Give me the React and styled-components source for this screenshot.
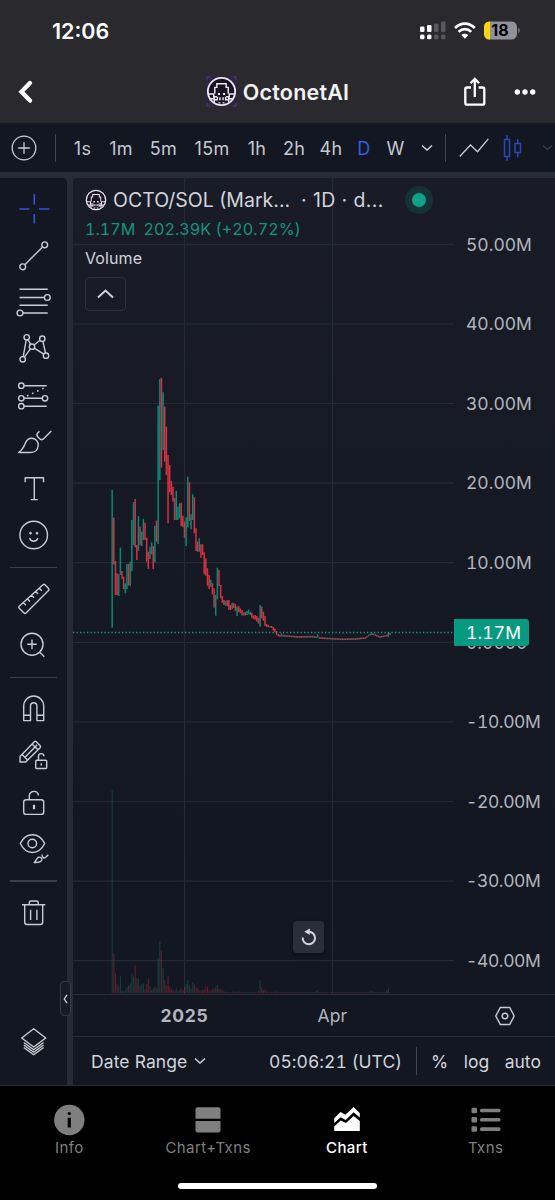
import React from 'react';
import styled, { createGlobalStyle } from 'styled-components';

const GlobalStyle = createGlobalStyle`
* {
    box-sizing: border-box;
}
body {
    margin: 0;
    background: #000;
    font-family: Inter, "Liberation Sans", sans-serif;
    color: #d1d4dc;
}
`;

const UP = '#089981';
const DOWN = '#f23645';

const intervals = [
    { label: '1s', width: 19 },
    { label: '1m', width: 24 },
    { label: '5m', width: 27 },
    { label: '15m', width: 36 },
    { label: '1h', width: 20 },
    { label: '2h', width: 20 },
    { label: '4h', width: 20 },
    { label: 'D', width: 12, active: true },
    { label: 'W', width: 17 },
];

const prices = ['50.00M', '40.00M', '30.00M', '20.00M', '10.00M', '0.0000', '-10.00M', '-20.00M', '-30.00M', '-40.00M'];

// one bar per day: direction, high, low (pane pixels)
const candles = [
    ['u', 312, 449.7], ['d', 339.7, 386.3], ['d', 383, 417], ['d', 395.3, 417], ['u', 396.3, 418], ['u', 369.7, 397],
    ['d', 393, 401], ['d', 398.7, 411], ['u', 405.3, 415.3], ['u', 386, 411], ['d', 386, 407.7], ['u', 383.7, 407.7],
    ['u', 342, 393], ['u', 324.3, 367], ['d', 321, 369.3], ['d', 367, 382], ['u', 338, 372.7], ['d', 348.7, 367],
    ['u', 353.7, 368], ['u', 341, 362], ['d', 344.7, 362], ['d', 359.7, 383.7], ['d', 373.7, 391], ['u', 368.7, 381],
    ['u', 364.3, 376.3], ['d', 368, 391], ['u', 348, 384.3], ['d', 342.7, 363.7], ['u', 227.7, 366], ['u', 201, 302],
    ['d', 199.7, 289.7], ['u', 214.3, 272], ['d', 228.7, 283.7], ['d', 248.7, 297], ['d', 277, 345.3], ['d', 287, 314.3],
    ['d', 303, 317], ['d', 308.7, 323.7], ['d', 320, 342], ['u', 312.7, 342], ['u', 328.7, 342], ['u', 325.3, 340.3],
    ['d', 324.7, 348], ['d', 337.7, 349.3], ['d', 343.7, 359.7], ['u', 339.3, 368], ['u', 298.7, 349.3], ['d', 304.3, 343],
    ['u', 336.3, 351.3], ['u', 316.3, 342], ['d', 319.3, 355.3], ['d', 350.3, 373], ['d', 363.7, 373.7], ['u', 360.3, 373.7],
    ['d', 366.3, 379.7], ['d', 366.3, 377], ['d', 374.3, 396.3], ['d', 380.3, 397.7], ['d', 390.3, 407.7], ['d', 397, 411],
    ['u', 402, 408.7], ['d', 405.3, 416.3], ['d', 410.3, 429.7], ['u', 417, 437.7], ['u', 389.7, 421.3], ['d', 392, 408],
    ['d', 407, 420.3], ['d', 418, 424.7], ['d', 422, 427], ['u', 423, 427.7], ['d', 422.3, 428], ['d', 422, 432],
    ['d', 427, 432], ['u', 424.7, 431], ['d', 425.3, 430], ['d', 426.3, 433], ['u', 428.7, 438], ['d', 428, 434],
    ['d', 430.5, 435], ['d', 432, 437.5], ['u', 434.5, 437.5], ['d', 434, 437.5], ['u', 433, 437], ['u', 431.5, 436],
    ['u', 434, 437], ['d', 434.5, 439.7], ['d', 437.5, 441], ['d', 437, 441.5], ['d', 438, 443.5], ['d', 440, 445.5],
    ['u', 427, 448.7], ['d', 428.7, 440.3], ['d', 433.7, 442.7], ['d', 438, 448], ['d', 446, 449], ['d', 447, 449.2],
    ['u', 448, 449.5], ['d', 448, 450], ['d', 449, 452.5], ['d', 450.5, 454.5], ['d', 453, 457], ['d', 456, 458.3],
    ['d', 457, 458.5], ['u', 455.3, 458.5], ['d', 456.8, 458.5], ['u', 457, 458.8],
];

// the flat months after the sell-off
const tail = [
    [106, 458], [113, 459], [122, 458.6], [126, 460], [140, 461.3], [148, 461], [154, 460], [156, 457.5], [158, 455.5], [160, 457],
    [163, 459], [166, 458], [168, 457], [170, 455],
];

tail.slice(0, -1).forEach(([from, y], k) => {
    const [to, end] = tail[k + 1];
    for (let i = from; i < to; i++) {
        const mid = y + ((end - y) * (i - from)) / (to - from);
        candles[i] = [i % 3 === 0 ? 'u' : 'd', mid - 0.8, mid + 0.8];
    }
});
candles[125] = ['u', 456.3, 459.5];
candles[158] = ['u', 454.5, 457];
candles[168] = ['u', 454.5, 459];

const volumes = [
    203, 40, 20, 9, 6, 17, 2, 2, 3, 6, 8, 10, 20, 17, 28, 15, 15, 7, 9, 10, 4, 9, 14, 7, 3, 5, 7, 5, 35, 52, 43, 25, 13, 8, 17, 7,
    4, 3, 2, 5, 2, 3, 5, 3, 6, 9, 13, 8, 5, 11, 9, 6, 5, 3, 3, 3, 4, 7, 7, 3, 3, 4, 5, 6, 8, 4, 4, 3, 2, 1.5, 1, 1, 1, 1, 2, 1, 1,
    2, 1, 1, 1, 1, 1, 1, 1, 1, 1, 1, 1, 2, 13, 6, 3, 4, 2, 1, 1, 1, 1, 1, 2, 1, 1,
];
volumes[124] = 2;
volumes[125] = 3;
volumes[157] = 2;
volumes[158] = 2;
volumes[167] = 3;
volumes[168] = 5;

const Octopus = ({ size, tile }) => (
    <svg width={size} height={size} viewBox="0 0 30 30" fill="none" stroke="#ece6f5" strokeWidth="1.4">
        {tile && <rect width="30" height="30" rx="1" fill="#2d2543" stroke="none" />}
        {tile && <path d="M1 4V1h3M26 1h3v3M1 26v3h3M26 29h3v-3" stroke="#463864" />}
        <circle cx="15" cy="15" r="13.2" fill="#17131f" strokeWidth="1.8" />
        <path d="M8.5 17v-6h2V7.5h9V11h2v6M2.5 17.5h5v2.5h3M27.5 17.5h-5v2.5h-3M4 22h4v-2M26 22h-4v-2M11 20v3H8v3M19 20v3h3v3M13.5 20.500v3M16.500 20.500v3M12 26h2M16 26h2" />
        <path d="M11.500 17.500h2M16.500 17.500h2" strokeWidth="2" />
    </svg>
);

const Chevron = ({ width = 12, flip, color = 'currentColor', weight = 1.5 }) => (
    <svg width={width} height={width / 2 + 2} viewBox={`0 0 ${width} ${width / 2 + 2}`} fill="none" stroke={color} strokeWidth={weight}>
        <path d={flip ? `M1 ${width / 2}L${width / 2} 1.500L${width - 1} ${width / 2}` : `M1 1.500L${width / 2} ${width / 2}L${width - 1} 1.500`} />
    </svg>
);

const tools = [
    [
        <path key="cross" stroke="#2e55e0" strokeWidth="1.6" d="M20.3 5.3V15.500M20.3 25V34.500M5.3 20H15.500M25 20H35.500" />,
        <g key="line">
            <circle cx="30.7" cy="8.800" r="2.900" />
            <circle cx="8.700" cy="30.800" r="2.900" />
            <path d="M28.600 10.900L10.800 28.700" />
        </g>,
        <g key="fib">
            <path d="M5.500 7.300H33.700M5.500 15.500H30.400M5.500 23.200H33.700M8.900 31H33.700" />
            <circle cx="33.300" cy="15.500" r="2.900" />
            <circle cx="6" cy="31" r="2.900" />
        </g>,
        <g key="pattern">
            <circle cx="12.700" cy="8.300" r="2.700" />
            <circle cx="28.300" cy="9.700" r="2.700" />
            <circle cx="18" cy="17.700" r="2.700" />
            <circle cx="8.700" cy="30.300" r="2.700" />
            <circle cx="32" cy="26.700" r="2.700" />
            <path d="M12.200 11L9.200 27.600M13.900 10.700L16.700 15.300M16.400 19.900L10.300 28.100M20.100 16L26 11.200M28.900 12.400L31.500 24M20.200 19.200L29.800 25.200" />
        </g>,
        <g key="forecast">
            <circle cx="7.300" cy="9.700" r="2.700" />
            <circle cx="7.300" cy="22.300" r="2.700" />
            <circle cx="31" cy="22.300" r="2.700" />
            <circle cx="7.300" cy="30.200" r="2.700" />
            <path d="M10 9.700H32.700M10 22.300H28.300M10 30.200H32.700" />
            <path d="M13 20L31 11.500" strokeDasharray="1.600 4" strokeWidth="1.600" />
        </g>,
        <g key="brush">
            <path d="M4.700 30.500C9 27.500 10 24.500 11.500 20.800C13 17.500 15.500 16 18.200 16.300C22 16.700 24.500 19.800 24.200 23.500C23.900 27.600 21 30.500 17 30.500Z" />
            <path d="M25.500 9.200L23.700 10.900C22.700 12 22.700 13.500 23.700 14.700L25.700 16.700C27 17.900 28.700 17.800 29.900 16.600L37.300 9" />
        </g>,
        <path key="text" d="M11.200 13.200V8.700H29.500V13.200M20.300 8.700V30.600M16.800 30.600H23.800" />,
        <g key="emoji">
            <circle cx="19.700" cy="20" r="13.800" />
            <path d="M15.500 23.300C17 27.200 22.400 27.200 23.900 23.300" />
            <circle cx="16.500" cy="18.200" r="1" fill="#c9ccd4" strokeWidth=".8" />
            <circle cx="23" cy="18.200" r="1" fill="#c9ccd4" strokeWidth=".8" />
        </g>,
    ],
    [
        <path key="ruler" d="M29 5.800Q30 4.800 31 5.800L34.500 9.500Q35.500 10.500 34.500 11.500L12 34Q11 35 10 34L5.200 29.300Q4.200 28.300 5.200 27.300ZM9.200 23.500L12 26.300M13.200 19.700L16 22.500M17.200 15.900L20 18.700M21.200 12.100L24 14.900M25 8.900L27.800 11.700" />,
        <path key="zoom" d="M29 18.300A11 11 0 1 1 7 18.300A11 11 0 1 1 29 18.300M18 13.600V23M13.300 18.300H22.700M25.600 26L30.300 30.700" />,
    ],
    [
        <path key="magnet" d="M9.700 31.600V17A10 10 0 0 1 29.700 17V31.600H22.900V17A3.200 3.200 0 0 0 16.500 17V31.600ZM9.700 26.300H16.500M22.900 26.300H29.700" />,
        <g key="pencil">
            <path d="M6 20.500L20.300 5.700Q21.300 4.800 22.300 5.700L26.200 9.700Q27 10.700 26.100 11.700L11.700 26H6ZM8 18.500L13.800 24.200M11 21.200L23.200 8.800M18 8L24 13.800" />
            <rect x="21.700" y="24.300" width="11" height="8.200" rx="1" />
            <path d="M24.500 24V20.500A2.700 2.700 0 0 1 29.900 20.200M27.200 27.300V29.500" />
        </g>,
        <g key="lock">
            <rect x="9.700" y="16.800" width="20" height="14.600" rx="2.500" />
            <path d="M15.300 16.500V12.500A4.700 4.700 0 0 1 24.300 11.300V12.500" />
            <path d="M20 21.800V26.200" strokeWidth="2.200" />
        </g>,
        <g key="eye">
            <path d="M6.300 14.500C9 9 13 5.700 18.300 5.700S28 9 30.700 14.500C28 20 23.800 23.500 18.300 23.500S9 20 6.300 14.500Z" />
            <circle cx="18.300" cy="14.500" r="4.300" />
            <path d="M20.200 33.500C22 32.500 22 30 24 28.500C26 27.500 28.500 29 27.800 31C27 33 24.500 33.700 20.200 33.500ZM28.200 25.500C27.500 28 30 29.700 31.500 28.500L34.300 25.800" />
        </g>,
    ],
    [
        <path key="trash" d="M8 11.700H31.300M15.300 11.500V9.500Q15.300 8 16.800 8H22.700Q24.200 8 24.200 9.500V11.500M10.700 11.700V29Q10.700 31.500 13.200 31.500H26.200Q28.700 31.500 28.700 29V11.700M16.600 16.800V27M22.900 16.800V27" />,
    ],
];

const ToolIcon = ({ children }) => (
    <ToolCell>
        <svg width="40" height="40" viewBox="0 0 40 40" fill="none" stroke="#c9ccd4" strokeWidth="1.400" strokeLinejoin="round">
            {children}
        </svg>
    </ToolCell>
);

const PriceChart = () => (
    <svg width="381" height="816" viewBox="0 0 381 816">
        {prices.map((p, i) => (
            <path key={p} d={`M0 ${66.300 + i * 79.600}H381`} stroke="#252a34" strokeWidth="1.200" />
        ))}
        <path d="M111.500 0V816M259.500 0V816" stroke="#252a34" strokeWidth="1.200" />
        {candles.map(([dir], i) => (
            <rect
                key={i}
                x={38.600 + i * 1.644}
                y={815.300 - (volumes[i] || 1)}
                width="1.150"
                height={volumes[i] || 1}
                fill={dir === 'u' ? UP : DOWN}
                opacity=".32"
            />
        ))}
        {candles.map(([dir, high, low], i) => (
            <rect key={i} x={38.400 + i * 1.644} y={high} width="1.500" height={low - high} fill={dir === 'u' ? UP : DOWN} opacity=".88" />
        ))}
        <path d="M0 454.500H381" stroke="#1c9a86" strokeWidth="1.300" strokeDasharray="1.300 2.200" />
    </svg>
);

const StatusIcons = () => (
    <svg width="104" height="22" viewBox="0 0 104 22">
        <g fill="#fff">
            <rect x="0" y="6.500" width="4.500" height="5.500" rx="1.200" />
            <rect x="7" y="5" width="4.500" height="7" rx="1.200" />
            <rect x="0" y="14.500" width="4.500" height="4.800" rx="1.500" />
            <rect x="7" y="14.500" width="4.500" height="4.800" rx="1.500" />
        </g>
        <g fill="#59585e">
            <rect x="14" y="3.500" width="4.500" height="8.500" rx="1.200" />
            <rect x="21" y="1.500" width="4.500" height="10.500" rx="1.200" />
            <rect x="14" y="14.500" width="4.500" height="4.800" rx="1.500" />
            <rect x="21" y="14.500" width="4.500" height="4.800" rx="1.500" />
        </g>
        <g fill="none" stroke="#fff" strokeWidth="2.700">
            <path d="M35 8C40.800 2.200 49 2.200 54.800 8" />
            <path d="M38.600 11.900C42.300 8.300 47.500 8.300 51.200 11.900" />
        </g>
        <path d="M41.400 15.100C43.300 13.300 46.500 13.300 48.400 15.100L44.900 18.700Z" fill="#fff" />
        <rect x="64" y="1.500" width="33" height="18" rx="5.500" fill="#929197" />
        <path d="M70 1.500H69.500A5.500 5.500 0 0 0 64 7V14A5.500 5.500 0 0 0 69.500 19.500H70Z" fill="#fdd60a" />
        <path d="M98.300 7.800C100 8.500 100 12.500 98.300 13.200Z" fill="#929197" />
        <text x="80" y="16.300" fontSize="16" fontWeight="700" textAnchor="middle">18</text>
    </svg>
);

const navItems = [
    {
        label: 'Info',
        icon: (
            <g>
                <circle cx="16.300" cy="16" r="15.200" fill="currentColor" />
                <circle cx="16.300" cy="9.600" r="1.700" fill="#000" />
                <path d="M16.300 13.800V23.500" stroke="#000" strokeWidth="3.200" />
            </g>
        ),
    },
    {
        label: 'Chart+Txns',
        icon: (
            <path fill="currentColor" d="M5.500 3.300H26.500Q28.500 3.300 28.500 5.300V14.800H3.500V5.300Q3.500 3.300 5.500 3.300ZM3.500 17H28.500V26.500Q28.500 28.500 26.500 28.500H5.500Q3.500 28.500 3.500 26.500Z" />
        ),
    },
    {
        label: 'Chart',
        active: true,
        icon: (
            <g fill="currentColor">
                <path d="M3.200 14.200L9.500 8L14.500 10.700L22.600 3L28.800 9.300V13.500L22.600 8.200L14.700 16L9.700 13.300L3.200 19Z" />
                <path d="M3.200 27V22.500L9.700 16.500L15 19L22.600 12L28.800 17V27Z" />
            </g>
        ),
    },
    {
        label: 'Txns',
        icon: (
            <g fill="currentColor">
                {[3.700, 13, 22.300].map((y) => (
                    <g key={y}>
                        <rect x="1.500" y={y} width="5.500" height="5.500" rx="1.200" />
                        <rect x="10" y={y + 1} width="20.500" height="3.600" rx="1.500" />
                    </g>
                ))}
            </g>
        ),
    },
];

const App = () => {
    return (
        <Screen>
            <GlobalStyle />
            <StatusBar>
                <Clock>12:06</Clock>
                <StatusIcons />
            </StatusBar>
            <Header>
                <HeaderSide>
                    <svg width="16" height="26" viewBox="0 0 16 26" fill="none" stroke="#fff" strokeWidth="4.300" strokeLinecap="round">
                        <path d="M12 4L3.400 12.800L12 21.600" />
                    </svg>
                </HeaderSide>
                <Title>
                    <Octopus size={31} tile />
                    OctonetAI
                </Title>
                <HeaderSide $end>
                    <svg width="24" height="30" viewBox="0 0 24 30" fill="none" stroke="#fff" strokeWidth="2.300">
                        <path d="M8 10.500H4Q2.300 10.500 2.300 12.200V26Q2.300 27.700 4 27.700H19.600Q21.300 27.700 21.300 26V12.200Q21.300 10.500 19.600 10.500H15.600M11.800 20V2.800M7.500 6.200L11.800 1.900L16.100 6.200" />
                    </svg>
                    <svg width="24" height="8" viewBox="0 0 24 8" fill="#fff">
                        <circle cx="4.300" cy="4" r="2.700" />
                        <circle cx="12" cy="4" r="2.700" />
                        <circle cx="19.700" cy="4" r="2.700" />
                    </svg>
                </HeaderSide>
            </Header>
            <Toolbar>
                <svg width="26" height="26" viewBox="0 0 26 26" fill="none" stroke="#c9ccd4" strokeWidth="1.300">
                    <circle cx="13" cy="13" r="11.800" />
                    <path d="M13 7.200V18.800M7.200 13H18.800" />
                </svg>
                <Rule $left={18} $right={17} />
                <Intervals>
                    {intervals.map((item) => (
                        <Interval key={item.label} $width={item.width} $active={item.active}>{item.label}</Interval>
                    ))}
                </Intervals>
                <MoreIntervals>
                    <Chevron />
                </MoreIntervals>
                <Rule $left={12} $right={13} />
                <svg width="30" height="20" viewBox="0 0 30 20" fill="none" stroke="#c9ccd4" strokeWidth="1.300">
                    <path d="M.700 18.500L11.500 7L18.500 13.700L29.300 .800" />
                </svg>
                <CandleIcon width="20" height="28" viewBox="0 0 20 28" fill="none" stroke="#2a49b5" strokeWidth="1.500">
                    <path d="M1.500 5.500H6.500V22.500H1.500ZM4 1V5.500M4 22.500V27M12 9.500H17.500V18.500H12ZM14.700 5V9.500M14.700 18.500V23.500" />
                </CandleIcon>
                <Chevron width={11} color="#343a46" />
            </Toolbar>
            <Workspace>
                <Sidebar>
                    {tools.map((group, i) => (
                        <React.Fragment key={i}>
                            {i > 0 && <ToolDivider />}
                            {group.map((icon) => <ToolIcon key={icon.key}>{icon}</ToolIcon>)}
                        </React.Fragment>
                    ))}
                    <Layers>
                        <ToolIcon>
                            <path d="M19.700 7.700L31.700 17L19.700 26L7.700 17ZM9.800 21.500L19.700 28.700L29.600 21.500M9.800 24L19.700 31.200L29.600 24M9.800 26.500L19.700 33.700L29.600 26.500" />
                        </ToolIcon>
                    </Layers>
                    <CollapseHandle>
                        <svg width="5" height="10" viewBox="0 0 5 10" fill="none" stroke="#d1d4dc" strokeWidth="1.300">
                            <path d="M4 .800L1.200 5L4 9.200" />
                        </svg>
                    </CollapseHandle>
                </Sidebar>
                <ChartPanel>
                    <Pane>
                        <PriceChart />
                        <PriceAxis>
                            {prices.map((p) => <PriceLabel key={p} $negative={p[0] === '-'}>{p}</PriceLabel>)}
                        </PriceAxis>
                        <LastPrice>1.17M</LastPrice>
                        <Legend>
                            <Symbol>
                                <Octopus size={22} />
                                <SymbolName>OCTO/SOL (Mark...</SymbolName>
                                <SymbolInfo>· 1D · d...</SymbolInfo>
                                <MarketDot />
                            </Symbol>
                            <Change>
                                <span>1.17M</span>
                                <span>202.39K (+20.72%)</span>
                            </Change>
                            <VolumeLabel>Volume</VolumeLabel>
                            <CollapseLegend>
                                <Chevron width={17} flip weight={2} />
                            </CollapseLegend>
                        </Legend>
                        <ResetButton>
                            <svg width="16" height="18" viewBox="0 0 16 18" fill="none" stroke="#d1d4dc" strokeWidth="2">
                                <path d="M1.700 9.500A6.200 6.200 0 1 0 8 3.800H6" />
                                <path d="M8.800 .500V7L3.300 3.800Z" fill="#d1d4dc" stroke="none" />
                            </svg>
                        </ResetButton>
                    </Pane>
                    <TimeAxis>
                        <TimeLabel $bold>2025</TimeLabel>
                        <TimeLabel>Apr</TimeLabel>
                        <svg width="20" height="20" viewBox="0 0 20 20" fill="none" stroke="#c9ccd4" strokeWidth="1.400">
                            <path d="M5.300 1.500H14.700L19.200 10L14.700 18.500H5.300L.800 10Z" />
                            <circle cx="10" cy="10" r="2.800" />
                        </svg>
                    </TimeAxis>
                    <BottomBar>
                        <DateRange>
                            Date Range
                            <Chevron />
                        </DateRange>
                        <Utc>05:06:21 (UTC)</Utc>
                        <Rule $left={14} $right={14} />
                        <Scales>
                            <span>%</span>
                            <span>log</span>
                            <span>auto</span>
                        </Scales>
                    </BottomBar>
                </ChartPanel>
            </Workspace>
            <BottomNav>
                <NavRow>
                    {navItems.map((item) => (
                        <NavItem key={item.label} $active={item.active}>
                            <svg width="32" height="32" viewBox="0 0 32 32">{item.icon}</svg>
                            {item.label}
                        </NavItem>
                    ))}
                </NavRow>
                <HomeIndicator />
            </BottomNav>
        </Screen>
    );
};

export default App;

const Screen = styled.div`
display: flex;
flex-direction: column;
width: 555px;
height: 1200px;
overflow: hidden;
svg {
    display: block;
    flex-shrink: 0;
}
`;

const StatusBar = styled.div`
display: flex;
align-items: center;
justify-content: space-between;
height: 62px;
padding: 0 31px 0 52px;
background: #2a292e;
`;

const Clock = styled.span`
font-size: 21.5px;
font-weight: 600;
color: #fff;
`;

const Header = styled.header`
display: grid;
grid-template-columns: 1fr auto 1fr;
align-items: center;
height: 61px;
padding: 0 18px 2px 18px;
background: #2a292e;
`;

const HeaderSide = styled.div`
display: flex;
align-items: center;
justify-content: ${(props) => (props.$end ? 'flex-end' : 'flex-start')};
gap: 26px;
`;

const Title = styled.h1`
display: flex;
align-items: center;
gap: 6px;
margin: 0;
font-size: 21.5px;
font-weight: 600;
letter-spacing: 0.2px;
color: #f2f2f4;
`;

const Toolbar = styled.div`
display: flex;
align-items: center;
height: 49px;
padding: 1px 0 0 11px;
background: #131722;
overflow: hidden;
`;

const Rule = styled.div`
width: 1px;
height: 28px;
margin: 0 ${(props) => props.$right}px 0 ${(props) => props.$left}px;
background: #434651;
flex-shrink: 0;
`;

const Intervals = styled.div`
display: flex;
gap: 17px;
`;

const Interval = styled.span`
display: flex;
justify-content: center;
width: ${(props) => props.$width}px;
font-size: 18px;
letter-spacing: 0.3px;
white-space: nowrap;
color: ${(props) => (props.$active ? '#2f5ce8' : '#c5c8d0')};
`;

const MoreIntervals = styled.div`
margin-left: 17px;
`;

const CandleIcon = styled.svg`
margin: 0 19px 0 14px;
`;

const Workspace = styled.div`
display: flex;
gap: 6px;
height: 914px;
padding: 6px 0 1px;
background: #272b35;
`;

const Sidebar = styled.aside`
position: relative;
display: flex;
flex-direction: column;
width: 67px;
padding-top: 8px;
border-top-right-radius: 5px;
background: #131722;
`;

const ToolCell = styled.div`
display: flex;
align-items: center;
height: 46.600px;
padding-left: 14px;
`;

const ToolDivider = styled.div`
width: 47px;
height: 1.500px;
margin: 7.800px 0 7.800px 10px;
background: #3b3f4a;
`;

const Layers = styled.div`
margin: auto 0 21px;
`;

const CollapseHandle = styled.div`
position: absolute;
top: 803px;
left: 60px;
z-index: 1;
display: flex;
align-items: center;
justify-content: center;
width: 11px;
height: 35px;
border: 1px solid #363a45;
border-radius: 4px;
background: #171b26;
`;

const ChartPanel = styled.main`
display: flex;
flex-direction: column;
flex: 1;
border-top-left-radius: 4px;
background: linear-gradient(#191c27, #131722 75%);
overflow: hidden;
`;

const Pane = styled.section`
position: relative;
display: flex;
height: 816px;
`;

const PriceAxis = styled.div`
flex: 1;
padding: 26.600px 0 0 12px;
overflow: hidden;
`;

const PriceLabel = styled.div`
height: 79.600px;
line-height: 79.600px;
font-size: 17.500px;
font-variant-numeric: tabular-nums;
letter-spacing: ${(props) => (props.$negative ? -0.4 : 0)}px;
color: #b2b5be;
white-space: nowrap;
`;

const LastPrice = styled.div`
position: absolute;
top: 441px;
left: 381px;
width: 75px;
height: 27px;
padding-left: 12px;
border-radius: 0 3px 3px 0;
background: #089981;
color: #fff;
font-size: 17.500px;
font-variant-numeric: tabular-nums;
letter-spacing: 0.1px;
line-height: 27px;
`;

const Legend = styled.div`
position: absolute;
top: 8px;
left: 12px;
`;

const Symbol = styled.div`
display: flex;
align-items: center;
height: 28px;
font-size: 19.500px;
white-space: nowrap;
`;

const SymbolName = styled.span`
width: 188px;
margin-left: 6px;
`;

const SymbolInfo = styled.span`
width: 82px;
letter-spacing: 0.4px;
`;

const MarketDot = styled.span`
width: 28px;
height: 28px;
margin-left: 22px;
border: 7.500px solid #173236;
border-radius: 50%;
background: #0fa288;
`;

const Change = styled.div`
display: flex;
gap: 8px;
height: 30px;
line-height: 30px;
font-size: 16.200px;
font-variant-numeric: tabular-nums;
color: #12947f;
`;

const VolumeLabel = styled.div`
height: 29px;
line-height: 29px;
font-size: 16px;
letter-spacing: 0.1px;
`;

const CollapseLegend = styled.div`
display: flex;
align-items: center;
justify-content: center;
width: 41px;
height: 34px;
margin-top: 4px;
border: 1.500px solid #2d313c;
border-radius: 4px;
`;

const ResetButton = styled.div`
position: absolute;
top: 743px;
left: 220px;
display: flex;
align-items: center;
justify-content: center;
width: 31px;
height: 32px;
border-radius: 4px;
background: #2b2e39;
box-shadow: 0 2px 5px rgba(0, 0, 0, 0.4);
`;

const TimeAxis = styled.div`
display: grid;
grid-template-columns: 223px 73px 1fr;
align-items: center;
height: 42px;
border-top: 1px solid #2a2e39;
svg {
    margin-left: 126px;
}
`;

const TimeLabel = styled.span`
justify-self: ${(props) => (props.$bold ? 'center' : 'end')};
margin-right: ${(props) => (props.$bold ? 0 : 22)}px;
font-size: 17.500px;
font-weight: ${(props) => (props.$bold ? 700 : 400)};
letter-spacing: ${(props) => (props.$bold ? 0.7 : 0)}px;
color: #b2b5be;
`;

const BottomBar = styled.div`
display: flex;
align-items: center;
height: 49px;
padding-left: 18px;
border-top: 1.500px solid #2a2e39;
font-size: 17.500px;
white-space: nowrap;
`;

const DateRange = styled.div`
display: flex;
align-items: center;
gap: 7px;
width: 178px;
letter-spacing: 0.1px;
`;

const Utc = styled.span`
width: 133px;
font-variant-numeric: tabular-nums;
letter-spacing: 0.050px;
`;

const Scales = styled.div`
display: flex;
gap: 15.500px;
`;

const BottomNav = styled.nav`
flex: 1;
padding-top: 18px;
background: #000;
`;

const NavRow = styled.div`
display: grid;
grid-template-columns: repeat(4, 1fr);
`;

const NavItem = styled.div`
display: flex;
flex-direction: column;
align-items: center;
gap: 2px;
font-size: 15px;
line-height: 20px;
font-weight: ${(props) => (props.$active ? 500 : 400)};
letter-spacing: 0.4px;
color: ${(props) => (props.$active ? '#fff' : '#7f7f7f')};
`;

const HomeIndicator = styled.div`
width: 199px;
height: 6px;
margin: 25px auto 0;
border-radius: 3px;
background: #fff;
`;
